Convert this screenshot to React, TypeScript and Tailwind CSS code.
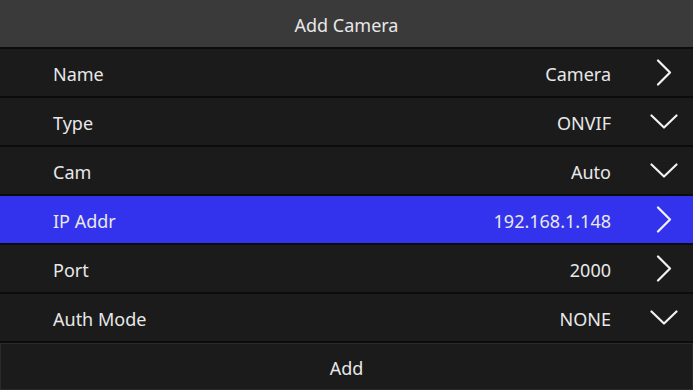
import React from "react";

const Right = () => (
  <svg width="28" height="27" viewBox="0 0 28 27" fill="none">
    <path d="M8 1.5 L20 13.5 L8 25.5" stroke="#f2f2f2" strokeWidth="2.2" strokeLinecap="round" strokeLinejoin="round" />
  </svg>
);
const Down = () => (
  <svg width="28" height="15" viewBox="0 0 28 15" fill="none">
    <path d="M1.5 1.5 L14 13.5 L26.5 1.5" stroke="#f2f2f2" strokeWidth="2.2" strokeLinecap="round" strokeLinejoin="round" />
  </svg>
);

const rows: { label: string; value: string; icon: "right" | "down"; active?: boolean }[] = [
  { label: "Name", value: "Camera", icon: "right" },
  { label: "Type", value: "ONVIF", icon: "down" },
  { label: "Cam", value: "Auto", icon: "down" },
  { label: "IP Addr", value: "192.168.1.148", icon: "right", active: true },
  { label: "Port", value: "2000", icon: "right" },
  { label: "Auth Mode", value: "NONE", icon: "down" },
];

export default function App() {
  return (
    <div
      className="w-[693px] h-[390px] bg-[#0c0c0c] flex flex-col gap-[2px] overflow-hidden text-[18px] text-[#e8e8e8]"
      style={{ fontFamily: '"Noto Sans", sans-serif' }}
    >
      <div className="h-[47px] shrink-0 bg-[#3a3a3a] flex items-center justify-center">
        <span className="pt-[4px]">Add Camera</span>
      </div>
      {rows.map((r) => (
        <div
          key={r.label}
          className={`h-[47px] shrink-0 flex items-center pl-[53px] ${r.active ? "bg-[#3333ee]" : "bg-[#1b1b1b]"}`}
        >
          <span className="flex-1 pt-[4px]">{r.label}</span>
          <span className="pt-[4px]">{r.value}</span>
          <span className="w-[28px] ml-[39px] mr-[15px] flex items-center justify-center">
            {r.icon === "right" ? <Right /> : <Down />}
          </span>
        </div>
      ))}
      <div className="h-[47px] shrink-0 bg-[#1b1b1b] border border-[#2a2a2a] flex items-center justify-center">
        <span className="pt-[4px]">Add</span>
      </div>
    </div>
  );
}
